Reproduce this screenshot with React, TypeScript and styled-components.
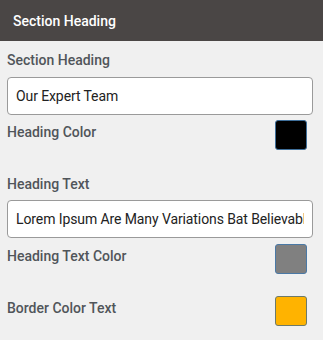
import React from 'react'
import styled, { createGlobalStyle } from 'styled-components'

const GlobalStyle = createGlobalStyle`
  html, body {
    margin: 0;
    padding: 0;
    background: #f0f0f0;
    font-family: Roboto, "Liberation Sans", Arial, sans-serif;
  }
`

const Panel = styled.div`
  width: 323px;
  height: 340px;
  background: #f0f0f0;
  overflow: hidden;
`

const Header = styled.div`
  height: 41px;
  background: #4a4645;
  color: #ffffff;
  display: flex;
  align-items: center;
  padding-left: 13px;
  font-size: 14px;
  font-weight: 500;
`

const Body = styled.div`
  padding: 0 10px 0 7px;
`

const Label = styled.div<{ $top: number }>`
  margin-top: ${({ $top }) => $top}px;
  font-size: 14px;
  line-height: 20px;
  font-weight: 500;
  color: #50555a;
`

const TextInput = styled.input<{ $top: number }>`
  display: block;
  box-sizing: border-box;
  width: 100%;
  height: 38px;
  margin-top: ${({ $top }) => $top}px;
  padding: 0 8px;
  border: 1px solid #9a9a9a;
  border-radius: 4px;
  background: #ffffff;
  font-family: Roboto, "Liberation Sans", Arial, sans-serif;
  font-size: 14px;
  letter-spacing: -0.1px;
  color: #222222;
  outline: none;
`

const ColorRow = styled.div<{ $top: number }>`
  display: flex;
  justify-content: space-between;
  align-items: flex-start;
  height: 30px;
  margin-top: ${({ $top }) => $top}px;

  & > ${Label} {
    padding-top: 2px;
  }
`

const Swatch = styled.div<{ $color: string; $edge: string }>`
  box-sizing: border-box;
  width: 32px;
  height: 30px;
  margin-right: 6px;
  border: 1px solid ${({ $edge }) => $edge};
  border-radius: 3px;
  background: ${({ $color }) => $color};
`

export default function App() {
  return (
    <>
      <GlobalStyle />
      <Panel>
        <Header>Section Heading</Header>
        <Body>
          <Label $top={9}>Section Heading</Label>
          <TextInput $top={7} defaultValue="Our Expert Team" />
          <ColorRow $top={5}>
            <Label $top={0}>Heading Color</Label>
            <Swatch $color="#000000" $edge="#3f6f9a" />
          </ColorRow>
          <Label $top={24}>Heading Text</Label>
          <TextInput $top={6} defaultValue="Lorem Ipsum Are Many Variations Bat Believable" />
          <ColorRow $top={6}>
            <Label $top={0}>Heading Text Color</Label>
            <Swatch $color="#808080" $edge="#4a79a6" />
          </ColorRow>
          <ColorRow $top={22}>
            <Label $top={0}>Border Color Text</Label>
            <Swatch $color="#ffb300" $edge="#6d7a6a" />
          </ColorRow>
        </Body>
      </Panel>
    </>
  )
}
